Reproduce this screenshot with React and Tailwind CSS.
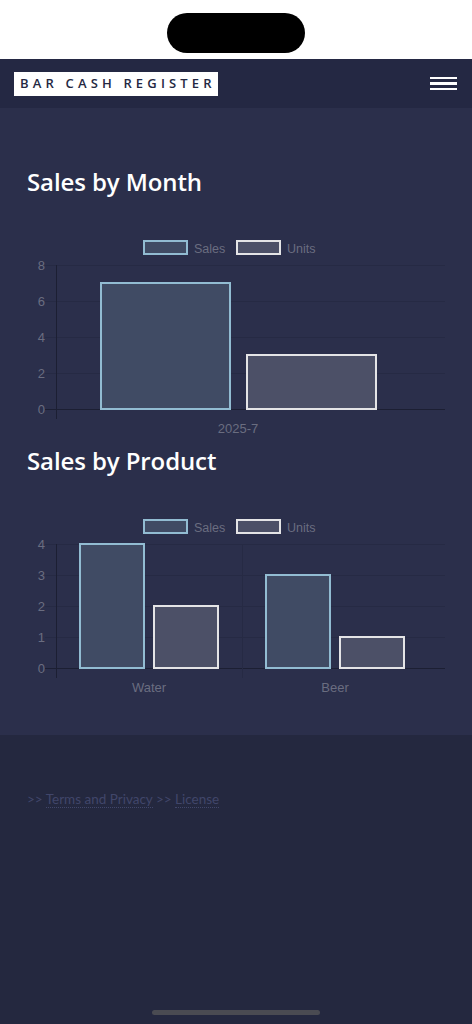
import React from "react";

const AX = "#6a6d80";
const GRID = "#262a44";
const AXIS = "#1c1f33";
const SALES_FILL = "#404b64";
const SALES_STROKE = "#92bcd2";
const UNITS_FILL = "#4c5067";
const UNITS_STROKE = "#e4e4e6";
const FF = "Liberation Sans, Arial, sans-serif";

function Legend({ y }) {
  return (
    <g fontFamily={FF} fontSize="12.5" fill={AX}>
      <rect x="144" y={y + 1} width="43" height="13" fill={SALES_FILL} stroke={SALES_STROKE} strokeWidth="2" />
      <text x="194" y={y + 13}>Sales</text>
      <rect x="237" y={y + 1} width="43" height="13" fill={UNITS_FILL} stroke={UNITS_STROKE} strokeWidth="2" />
      <text x="287" y={y + 13}>Units</text>
    </g>
  );
}

function Bar({ x, w, top, bottom, sales }) {
  return (
    <rect
      x={x}
      y={top}
      width={w}
      height={bottom - top}
      fill={sales ? SALES_FILL : UNITS_FILL}
      stroke={sales ? SALES_STROKE : UNITS_STROKE}
      strokeWidth="2"
    />
  );
}

function MonthChart() {
  const y0 = 236;
  const ticks = [8, 6, 4, 2, 0];
  const yOf = (v) => 409 - v * 18;
  return (
    <svg width="472" height="206" viewBox={`0 ${y0} 472 206`} className="block">
      <Legend y={240} />
      {ticks.map((t) => (
        <g key={t}>
          <line x1="45" x2="445" y1={yOf(t) + 0.5} y2={yOf(t) + 0.5} stroke={t === 0 ? AXIS : GRID} strokeWidth="1" />
          <text x="45" y={yOf(t) + 5} textAnchor="end" fontSize="13" fill={AX} fontFamily={FF}>{t}</text>
        </g>
      ))}
      <line x1="56.5" x2="56.5" y1="265" y2="419" stroke={AXIS} strokeWidth="1" />
      <Bar x={101} w={129} top={yOf(7)} bottom={409} sales />
      <Bar x={247} w={129} top={yOf(3)} bottom={409} />
      <text x="238" y="433" textAnchor="middle" fontSize="13" fill={AX} fontFamily={FF}>2025-7</text>
    </svg>
  );
}

function ProductChart() {
  const y0 = 515;
  const ticks = [4, 3, 2, 1, 0];
  const yOf = (v) => 668 - v * 31;
  return (
    <svg width="472" height="180" viewBox={`0 ${y0} 472 180`} className="block">
      <Legend y={519} />
      {ticks.map((t) => (
        <g key={t}>
          <line x1="45" x2="445" y1={yOf(t) + 0.5} y2={yOf(t) + 0.5} stroke={t === 0 ? AXIS : GRID} strokeWidth="1" />
          <text x="45" y={yOf(t) + 5} textAnchor="end" fontSize="13" fill={AX} fontFamily={FF}>{t}</text>
        </g>
      ))}
      <line x1="56.5" x2="56.5" y1="544" y2="678" stroke={AXIS} strokeWidth="1" />
      <line x1="242.5" x2="242.5" y1="544" y2="678" stroke={GRID} strokeWidth="1" />
      <Bar x={80} w={64} top={yOf(4)} bottom={668} sales />
      <Bar x={154} w={64} top={yOf(2)} bottom={668} />
      <Bar x={266} w={64} top={yOf(3)} bottom={668} sales />
      <Bar x={340} w={64} top={yOf(1)} bottom={668} />
      <text x="149" y="692" textAnchor="middle" fontSize="13" fill={AX} fontFamily={FF}>Water</text>
      <text x="335" y="692" textAnchor="middle" fontSize="13" fill={AX} fontFamily={FF}>Beer</text>
    </svg>
  );
}

export default function App() {
  return (
    <div className="w-[472px] h-[1024px] flex flex-col bg-[#24283f] overflow-hidden relative" style={{ fontFamily: "'Open Sans', 'Noto Sans', sans-serif" }}>
      <div className="h-[59px] bg-white flex justify-center pt-[13px] shrink-0">
        <div className="w-[138px] h-[40px] rounded-full bg-black" />
      </div>
      <header className="h-[49px] bg-[#242843] flex items-center justify-between pl-[14px] pr-[15px] shrink-0">
        <div className="h-[24px] w-[204px] bg-white flex items-center pl-[6px] text-[13px] font-semibold tracking-[0.32em] text-[#242843] whitespace-nowrap">
          BAR CASH REGISTER
        </div>
        <div className="flex flex-col gap-[3px] w-[27px]">
          <div className="h-[2.5px] bg-white" />
          <div className="h-[2.5px] bg-white" />
          <div className="h-[2.5px] bg-white" />
        </div>
      </header>
      <main className="bg-[#2b2f4b] h-[627px] shrink-0 flex flex-col">
        <h2 className="text-[24px] font-semibold text-white pl-[27px] pt-[57px] leading-[34px] tracking-[-0.1px]">Sales by Month</h2>
        <div className="mt-[37px]">
          <MonthChart />
        </div>
        <h2 className="text-[24px] font-semibold text-white pl-[27px] mt-[2px] leading-[34px] tracking-[-0.1px]">Sales by Product</h2>
        <div className="mt-[37px]">
          <ProductChart />
        </div>
      </main>
      <footer className="pl-[27px] pt-[54px] text-[13.5px] text-[#41466a]" style={{ fontFamily: "Lato, sans-serif" }}>
        <span>&gt;&gt; </span>
        <a className="border-b border-dotted border-[#41466a]">Terms and Privacy</a>
        <span> &gt;&gt; </span>
        <a className="border-b border-dotted border-[#41466a]">License</a>
      </footer>
      <div className="absolute left-[152px] bottom-[9px] w-[168px] h-[5px] rounded-full bg-[#4a4b52]" />
    </div>
  );
}
